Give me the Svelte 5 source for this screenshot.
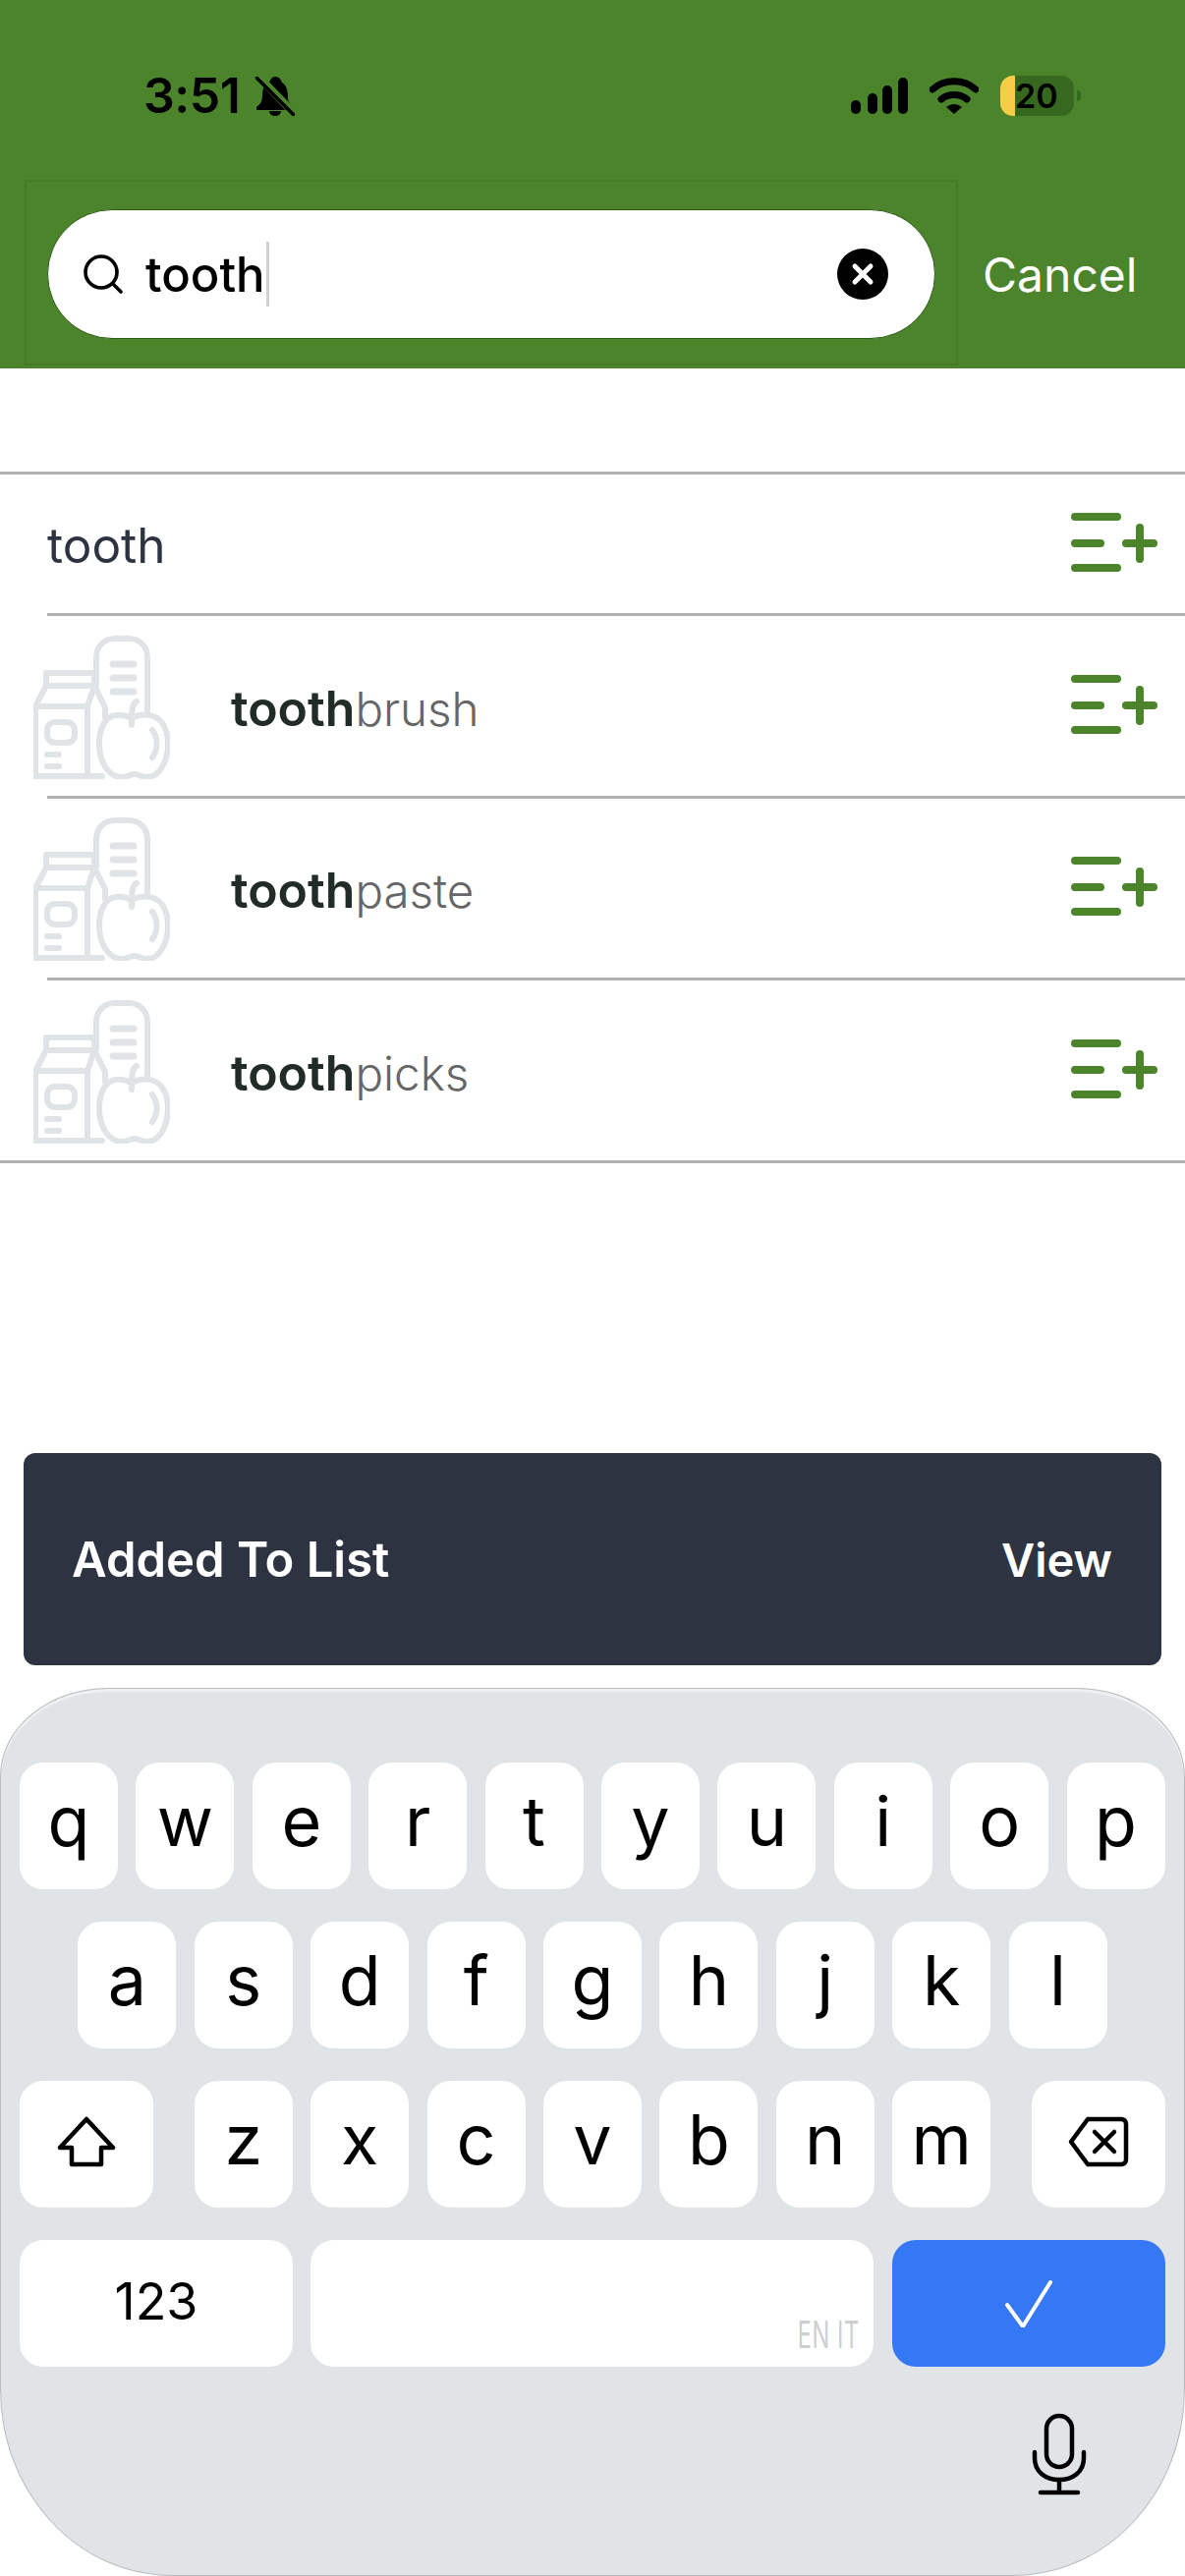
<script>
  const suggestions = ['brush', 'paste', 'picks'];
  const topRow = ['q', 'w', 'e', 'r', 't', 'y', 'u', 'i', 'o', 'p'];
  const midRow = ['a', 's', 'd', 'f', 'g', 'h', 'j', 'k', 'l'];
  const lowRow = ['z', 'x', 'c', 'v', 'b', 'n', 'm'];
  const signalBars = [
    { x: 0, y: 23, h: 14 },
    { x: 17, y: 16, h: 21 },
    { x: 32, y: 8, h: 29 },
    { x: 48, y: 0, h: 37 }
  ];
</script>

{#snippet addIcon()}
  <svg class="add-icon" viewBox="0 0 88 60" fill="none" stroke="#4b842b" stroke-width="8" stroke-linecap="round">
    <path d="M4 4H47M4 31H30M4 56H47M56 31H84M70 15V47" />
  </svg>
{/snippet}

{#snippet groceryIcon()}
  <svg class="grocery" viewBox="0 0 139 146" fill="none" stroke="#e1e4e7" stroke-width="6" stroke-linecap="round" stroke-linejoin="round">
    <path d="M64 50V22C64 11 72 3 83 3H97C108 3 116 11 116 22V79" />
    <path d="M81 29H102M81 43H102M81 57H102" stroke-width="7" />
    <path d="M13 38H62V51H13ZM13 51L2 72H55L62 51L73 73V83M2 72V143H70M55 72V143" />
    <rect x="14" y="88" width="28" height="21" rx="8" />
    <path d="M14 121H26M14 133H26" stroke-width="6" />
    <path d="M105 67C101 69 100 73 100 91" />
    <path d="M100 84C92 80 84 80 80 82C72 85 67 96 67 110C67 128 76 144 90 144C96 144 99 141 103 141C107 141 110 144 116 144C128 144 137 128 137 110C137 96 131 85 122 82C116 80 108 80 100 84Z" />
    <path d="M121 96C127 104 127 116 121 124" />
  </svg>
{/snippet}

<div class="screen">
  <header class="top">
    <div class="status">
      <div class="status-left">
        <span class="time">3:51</span>
        <svg class="bell" viewBox="0 0 40 40">
          <path d="M20 0C24 0 26 3 27 6C32 9 33 15 33 21C33 26 36 29 39 32V34H1V31C5 28 7 25 7 19C7 13 9 8 14 6C15 3 17 0 20 0Z" fill="#000" />
          <path d="M14 35H26C26 38 23 40 20 40C17 40 14 38 14 35Z" fill="#000" />
          <path d="M5 2L39 37" stroke="#4b842b" stroke-width="8" />
          <path d="M1 1L39 39" stroke="#000" stroke-width="3.5" stroke-linecap="round" />
        </svg>
      </div>
      <div class="status-right">
        <svg class="signal" viewBox="0 0 58 37">
          {#each signalBars as bar}
            <rect x={bar.x} y={bar.y} width="10" height={bar.h} rx="5" fill="#000" />
          {/each}
        </svg>
        <svg class="wifi" viewBox="0 0 50 37" fill="none" stroke="#000" stroke-width="7" stroke-linecap="round">
          <path d="M3 12C15 1 35 1 47 12" />
          <path d="M12 22C19 16 31 16 38 22" />
          <path d="M17 30L25 37L33 30C28 26 22 26 17 30Z" fill="#000" stroke="none" />
        </svg>
        <div class="battery">
          <div class="battery-body">
            <span class="battery-fill"></span>
            <span class="battery-level">20</span>
          </div>
          <span class="battery-nub"></span>
        </div>
      </div>
    </div>

    <div class="search-line">
      <div class="search-frame">
        <div class="search-pill">
          <svg class="lens" viewBox="0 0 40 40" fill="none" stroke="#000" stroke-width="3.6" stroke-linecap="round">
            <circle cx="18" cy="18" r="16" />
            <path d="M30 30L38 38" />
          </svg>
          <span class="query">tooth</span>
          <span class="caret"></span>
          <svg class="clear" viewBox="0 0 52 52">
            <circle cx="26" cy="26" r="26" fill="#000" />
            <path d="M18 18L34 34M34 18L18 34" stroke="#fff" stroke-width="5" stroke-linecap="round" />
          </svg>
        </div>
      </div>
      <span class="cancel">Cancel</span>
    </div>
  </header>

  <section class="results">
    <div class="row row-plain">
      <span class="plain-term">tooth</span>
      {@render addIcon()}
    </div>
    {#each suggestions as ending, i}
      <div class="row row-item" class:last={i === suggestions.length - 1}>
        {@render groceryIcon()}
        <span class="term"><b>tooth</b>{ending}</span>
        {@render addIcon()}
      </div>
    {/each}
  </section>

  <div class="snack">
    <span class="snack-label">Added To List</span>
    <span class="snack-action">View</span>
  </div>

  <div class="keyboard">
    <div class="keys">
      <div class="key-row">
        {#each topRow as letter}
          <div class="key">{letter}</div>
        {/each}
      </div>
      <div class="key-row centered">
        {#each midRow as letter}
          <div class="key">{letter}</div>
        {/each}
      </div>
      <div class="key-row spread">
        <div class="key wide">
          <svg class="shift" viewBox="0 0 60 52" fill="none" stroke="#000" stroke-width="4.5" stroke-linejoin="round">
            <path d="M30 3L57 32H45V49H15V32H3Z" />
          </svg>
        </div>
        <div class="letters">
          {#each lowRow as letter}
            <div class="key">{letter}</div>
          {/each}
        </div>
        <div class="key wide">
          <svg class="backspace" viewBox="0 0 62 52" fill="none" stroke="#000" stroke-width="4.5" stroke-linejoin="round" stroke-linecap="round">
            <path d="M20 3H54C57 3 59 5 59 8V44C59 47 57 49 54 49H20L3 26Z" />
            <path d="M27 16L47 36M47 16L27 36" />
          </svg>
        </div>
      </div>
      <div class="key-row bottom-row">
        <div class="key numbers">123</div>
        <div class="key space"><span class="langs">EN IT</span></div>
        <div class="key done">
          <svg class="check" viewBox="0 0 48 48" fill="none" stroke="#fff" stroke-width="4" stroke-linecap="round" stroke-linejoin="round">
            <path d="M2 25L18 47L46 2" />
          </svg>
        </div>
      </div>
    </div>
    <div class="mic-line">
      <svg class="mic" viewBox="0 0 56 84" fill="none" stroke="#000" stroke-width="4.5" stroke-linecap="round">
        <rect x="15" y="3" width="26" height="52" rx="13" />
        <path d="M3 40V46C3 60 14 68 28 68C42 68 53 60 53 46V40" />
        <path d="M28 68V81M9 81H47" />
      </svg>
    </div>
  </div>
</div>

<style>
  :global(body) {
    margin: 0;
    background: #fff;
  }

  .screen {
    width: 1206px;
    height: 2622px;
    display: flex;
    flex-direction: column;
    background: #fff;
    overflow: hidden;
    font-family: Inter, "Liberation Sans", sans-serif;
  }

  .top {
    height: 375px;
    box-sizing: border-box;
    background: #4b842b;
    padding-top: 77px;
  }

  .status {
    height: 41px;
    display: flex;
    justify-content: space-between;
    align-items: center;
    padding: 0 106px 0 146px;
  }

  .status-left {
    display: flex;
    align-items: center;
    gap: 16px;
  }

  .time {
    font-size: 50px;
    font-weight: 600;
    line-height: 41px;
    color: #000;
    letter-spacing: -0.5px;
  }

  .bell {
    width: 40px;
    height: 40px;
  }

  .status-right {
    display: flex;
    align-items: center;
    gap: 22px;
  }

  .signal {
    width: 58px;
    height: 37px;
  }

  .wifi {
    width: 50px;
    height: 37px;
  }

  .battery {
    display: flex;
    align-items: center;
    gap: 3px;
  }

  .battery-body {
    position: relative;
    width: 75px;
    height: 41px;
    box-sizing: border-box;
    padding-left: 15px;
    display: flex;
    align-items: center;
    background: #36691f;
    border-radius: 13px;
    overflow: hidden;
  }

  .battery-fill {
    position: absolute;
    left: 0;
    top: 0;
    bottom: 0;
    width: 15px;
    background: #f6cd46;
  }

  .battery-level {
    position: relative;
    font-size: 34px;
    font-weight: 600;
    color: #000;
  }

  .battery-nub {
    width: 4px;
    height: 11px;
    background: #36691f;
    border-radius: 0 4px 4px 0;
  }

  .search-line {
    display: flex;
    align-items: center;
    margin-top: 65px;
    padding-left: 25px;
  }

  .search-frame {
    width: 950px;
    height: 189px;
    box-sizing: border-box;
    border: 2px solid #447a27;
    padding: 28px 21px 0 21px;
  }

  .search-pill {
    height: 132px;
    box-sizing: border-box;
    display: flex;
    align-items: center;
    background: #fff;
    border: 1px solid #2f5c18;
    border-radius: 66px;
    padding: 0 21px 0 36px;
  }

  .lens {
    width: 40px;
    height: 40px;
    margin-right: 23px;
  }

  .query {
    font-size: 49px;
    font-weight: 500;
    color: #000;
  }

  .caret {
    width: 3px;
    height: 66px;
    margin-left: 1px;
    background: #cfd1d3;
  }

  .clear {
    width: 52px;
    height: 52px;
    margin-left: auto;
    margin-right: 26px;
  }

  .cancel {
    margin-left: 25px;
    font-size: 48px;
    color: #fff;
    margin-top: 4px;
  }

  .results {
    margin-top: 105px;
    border-top: 3px solid #b2b2b2;
  }

  .row {
    position: relative;
    display: flex;
    align-items: center;
    box-sizing: border-box;
    padding-right: 28px;
  }

  .row::after {
    content: '';
    position: absolute;
    left: 48px;
    right: 0;
    bottom: 0;
    height: 3px;
    background: #b2b2b2;
  }

  .row-item.last::after {
    left: 0;
  }

  .row-plain {
    height: 144px;
    padding-left: 48px;
    justify-content: space-between;
  }

  .plain-term {
    font-size: 49.5px;
    color: #2d3340;
  }

  .row-item {
    height: 185.5px;
    padding-left: 34px;
  }

  .grocery {
    width: 139px;
    height: 146px;
    margin-right: 62px;
  }

  .term {
    font-size: 47.5px;
    font-weight: 300;
    color: #666;
    margin-top: 2px;
  }

  .term b {
    font-size: 50px;
    font-weight: 600;
    color: #202c25;
  }

  .add-icon {
    width: 88px;
    height: 60px;
    margin-left: auto;
    margin-bottom: 6px;
  }

  .snack {
    margin: auto 24px 23px;
    height: 216px;
    box-sizing: border-box;
    padding: 0 50px 0 49px;
    display: flex;
    align-items: center;
    justify-content: space-between;
    background: #2d3340;
    border-radius: 12px;
    color: #fff;
    font-weight: 600;
  }

  .snack-label {
    font-size: 49px;
  }

  .snack-action {
    font-size: 47px;
  }

  .keyboard {
    height: 904px;
    box-sizing: border-box;
    background: #e1e4e7;
    border: 1px solid #b9bcbf;
    border-radius: 110px 110px 175px 175px / 90px 90px 190px 190px;
    padding: 75px 19px 0;
    box-shadow: inset 0 3px 0 #eef0f1;
  }

  .keys {
    display: flex;
    flex-direction: column;
    gap: 33px;
  }

  .key-row {
    display: flex;
    gap: 18.4px;
  }

  .key-row.centered {
    justify-content: center;
  }

  .key-row.spread {
    justify-content: space-between;
  }

  .letters {
    display: flex;
    gap: 18.4px;
  }

  .key {
    width: 100px;
    height: 129px;
    flex: none;
    display: flex;
    align-items: center;
    justify-content: center;
    background: #fff;
    border-radius: 24px;
    color: #000;
    font-size: 70px;
    line-height: 1;
    padding-bottom: 10px;
    box-sizing: border-box;
  }

  .key.wide {
    width: 136px;
    padding-bottom: 6px;
  }

  .key.numbers {
    width: 278px;
    font-size: 52px;
    padding-bottom: 4px;
  }

  .key.space {
    width: 573px;
    position: relative;
  }

  .langs {
    position: absolute;
    right: 14px;
    bottom: 14px;
    font-size: 38px;
    line-height: 1;
    letter-spacing: 1px;
    color: #cdcfd1;
    transform: scaleX(0.62);
    transform-origin: right bottom;
    white-space: nowrap;
  }

  .key.done {
    width: 278px;
    background: #3478f6;
    padding-bottom: 0;
  }

  .shift {
    width: 60px;
    height: 52px;
  }

  .backspace {
    width: 62px;
    height: 52px;
  }

  .check {
    width: 48px;
    height: 48px;
  }

  .mic-line {
    display: flex;
    justify-content: flex-end;
    padding: 47px 80px 0 0;
  }

  .mic {
    width: 56px;
    height: 84px;
  }
</style>
